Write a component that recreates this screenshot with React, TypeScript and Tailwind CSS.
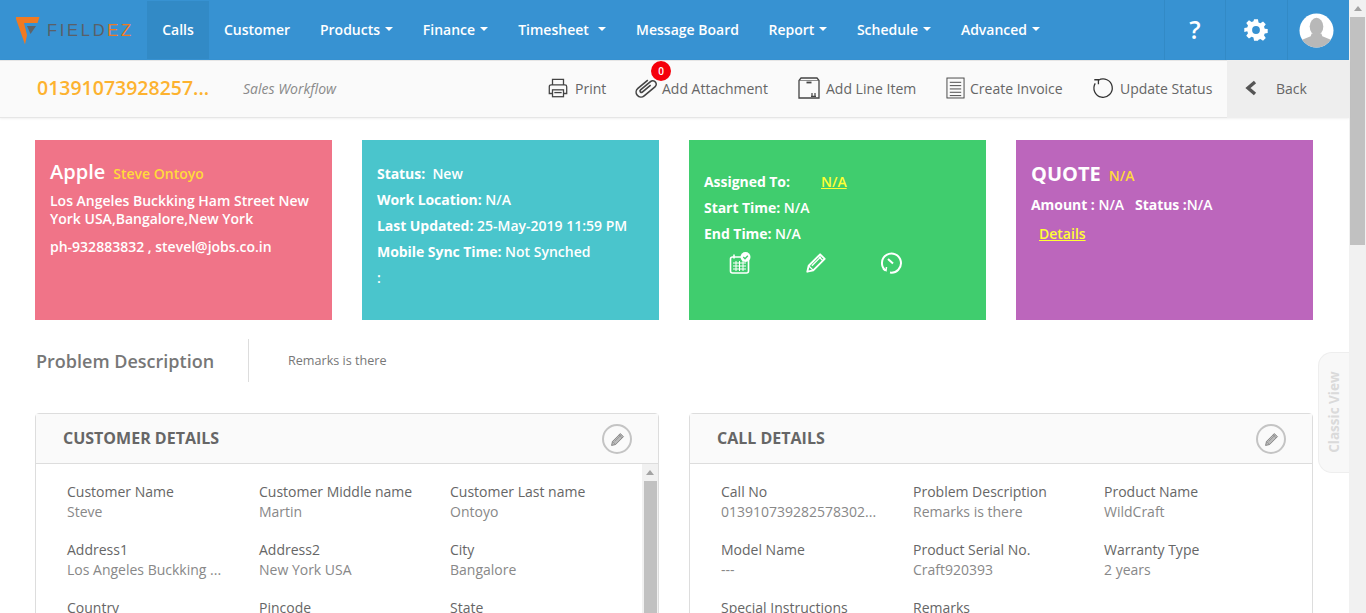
import React from "react";

const NAV = [
  { label: "Calls", w: "w-[62px]", active: true },
  { label: "Customer", w: "w-[96px]" },
  { label: "Products", w: "w-[103px]", caret: true },
  { label: "Finance", w: "w-[95px]", caret: true },
  { label: "Timesheet", w: "w-[118px]", caret: true, wide: true },
  { label: "Message Board", w: "w-[133px]" },
  { label: "Report", w: "w-[88px]", caret: true },
  { label: "Schedule", w: "w-[104px]", caret: true },
  { label: "Advanced", w: "w-[109px]", caret: true },
];

const CUSTOMER = [
  ["Customer Name", "Steve"],
  ["Customer Middle name", "Martin"],
  ["Customer Last name", "Ontoyo"],
  ["Address1", "Los Angeles Buckking ..."],
  ["Address2", "New York USA"],
  ["City", "Bangalore"],
  ["Country", "USA"],
  ["Pincode", "560001"],
  ["State", "New York"],
];

const CALL = [
  ["Call No", "013910739282578302..."],
  ["Problem Description", "Remarks is there"],
  ["Product Name", "WildCraft"],
  ["Model Name", "---"],
  ["Product Serial No.", "Craft920393"],
  ["Warranty Type", "2 years"],
  ["Special Instructions", "---"],
  ["Remarks", "---"],
  ["", ""],
];

const Caret = ({ wide }: { wide?: boolean }) => (
  <span className={`inline-block border-x-[4px] border-t-[4px] border-x-transparent border-t-white align-middle ${wide ? "ml-[9px]" : "ml-[5px]"}`} />
);

const PencilIcon = ({ className, sw = 1.6, fill = "none" }: { className: string; sw?: number; fill?: string }) => (
  <svg viewBox="0 0 24 24" className={className} fill={fill} stroke="currentColor" strokeWidth={sw} strokeLinejoin="round">
    <path d="M2.500 21.500l1.500-6.500L16.500 2.500l5 5L9 20z" />
    <path d="M4 15l5 5M14.500 4.500l5 5M7.500 15L17.500 5" strokeWidth={sw * 0.7} />
  </svg>
);

const Logo = () => (
  <div className="flex w-[147px] items-center pl-[16px]">
    <svg viewBox="0 0 24 29" className="h-[29px] w-[24px] shrink-0">
      <path d="M0 1h23.500l-2 6H8l3 12-2 9.500L0 3z" fill="#f07a22" />
      <path d="M11 10h9l-5.500 8z" fill="#5f6368" />
    </svg>
    <span className="ml-[7px] whitespace-nowrap text-[16.5px] tracking-[2.7px] text-[#5a6068] [font-family:'Liberation_Sans',sans-serif]">
      FIELD<span className="text-[#f07a22]">EZ</span>
    </span>
  </div>
);

const ToolItem = ({ icon, label, w, gap = "gap-[5px]" }: { icon: React.ReactNode; label: string; w: string; gap?: string }) => (
  <div className={`mb-[2px] flex items-center ${gap} ${w}`}>
    {icon}
    <span className="text-[14px] text-[#666]">{label}</span>
  </div>
);

const Label = ({ children, className = "" }: { children: React.ReactNode; className?: string }) => (
  <b className={`font-bold tracking-[-0.05px] ${className}`}>{children}</b>
);

const Field = ({ label, value }: { label: string; value: string }) => (
  <div className="h-[58px] text-[14px] leading-[20px]">
    <div className="text-[#666]">{label}</div>
    <div className="text-[#888]">{value}</div>
  </div>
);

const Panel = ({ title, rows, scroll }: { title: string; rows: string[][]; scroll?: boolean }) => (
  <div className="h-[300px] w-[624px] rounded-t-[4px] border border-[#ddd]">
    <div className="flex h-[50px] items-center justify-between border-b border-[#ddd] bg-[#fafafa] pl-[27px] pr-[26px]">
      <span className="mb-[2px] text-[16px] font-bold text-[#666]">{title}</span>
      <div className="mt-[1px] flex h-[30px] w-[30px] items-center justify-center rounded-full border-2 border-[#c4c4c4] text-[#888]">
        <PencilIcon className="h-[15px] w-[15px]" sw={1.6} fill="#bbb" />
      </div>
    </div>
    <div className="flex">
      <div className="grid flex-1 grid-cols-[192px_191px_192px] pl-[31px] pt-[18px]">
        {rows.map((r, i) => (
          <Field key={i} label={r[0]} value={r[1]} />
        ))}
      </div>
      {scroll && (
        <div className="flex w-[16px] flex-col items-center bg-[#f1f1f1]">
          <div className="mt-[6px] h-0 w-0 border-x-[4px] border-b-[5px] border-x-transparent border-b-[#a3a3a3]" />
          <div className="mt-[6px] h-[140px] w-[13px] bg-[#c1c1c1]" />
        </div>
      )}
    </div>
  </div>
);

export default function App() {
  return (
    <div className="flex h-[613px] w-[1366px] overflow-hidden bg-white [font-family:'Open_Sans',sans-serif]">
      <div className="relative w-[1349px] shrink-0">
        {/* top nav */}
        <div className="flex h-[60px] bg-[#3792d2]">
          <Logo />
          {NAV.map((n) => (
            <div
              key={n.label}
              className={`mt-px flex h-[58px] items-center justify-center pb-[2px] text-[14px] font-semibold text-white ${n.w} ${n.active ? "bg-[#328ac6]" : ""}`}
            >
              {n.label}
              {n.caret && <Caret wide={n.wide} />}
            </div>
          ))}
          <div className="ml-auto flex">
            <div className="flex w-[61px] items-center justify-center border-l border-[#328ac6] text-[25px] font-semibold text-white">?</div>
            <div className="flex w-[62px] items-center justify-center border-l border-[#328ac6] pr-[2px] text-white">
              <svg viewBox="0 0 24 24" className="h-[26px] w-[26px]" fill="currentColor">
                <path
                  fillRule="evenodd"
                  d="M10 1h4l.6 3.2 1.900.8 2.700-1.800 2.800 2.800-1.800 2.700.8 1.900 3 .4v4l-3 .6-.8 1.900 1.800 2.700-2.800 2.800-2.700-1.800-1.900.8L14 23h-4l-.6-3.200-1.900-.8-2.700 1.800L2 18l1.800-2.700-.8-1.900L0 14v-4l3-.6.8-1.900L2 4.800 4.800 2l2.700 1.800 1.900-.8zM12 8a4 4 0 100 8 4 4 0 000-8z"
                  transform="translate(1.200 1.200) scale(.9)"
                />
              </svg>
            </div>
            <div className="flex w-[62px] items-center justify-center border-l border-[#328ac6] pr-[4px]">
              <svg viewBox="0 0 36 36" className="h-[35px] w-[35px]">
                <clipPath id="avatarClip">
                  <circle cx="18" cy="18" r="17.500" />
                </clipPath>
                <circle cx="18" cy="18" r="17.500" fill="#fff" />
                <g clipPath="url(#avatarClip)" fill="#b8b8b8">
                  <ellipse cx="18" cy="14" rx="7" ry="9" />
                  <path d="M13 21h10l1 3 10 4v8H2v-8l10-4z" />
                </g>
              </svg>
            </div>
          </div>
        </div>

        {/* sub header */}
        <div className="flex h-[58px] items-center border-y border-[#e6e6e6] bg-[#fafafa] pl-[36px] shadow-[0_1px_2px_rgba(0,0,0,0.06)]">
          <span className="mb-[2px] ml-px w-[206px] text-[19.5px] font-semibold text-[#fdb22f]">01391073928257...</span>
          <span className="mb-[2px] w-[304px] text-[14px] italic text-[#8a8a8a]">Sales Workflow</span>
          <ToolItem
            w="w-[88px]"
            gap="gap-[6px]"
            label="Print"
            icon={
              <svg viewBox="0 0 24 24" className="h-[22px] w-[22px] text-[#444]" fill="none" stroke="currentColor" strokeWidth="1.400">
                <path d="M6 8V2.500h12V8M6 18H2.500V10.500a2 2 0 012-2h15a2 2 0 012 2V18H18" />
                <rect x="6" y="14" width="12" height="7.500" />
                <path d="M8 17h8" />
              </svg>
            }
          />
          <div className="relative mb-[2px] w-[162px]">
            <div className="flex items-center">
              <svg viewBox="0 0 24 24" className="-my-px -ml-[2px] h-[26px] w-[26px] text-[#444]" fill="none" stroke="currentColor" strokeWidth="1.500">
                <path d="M7.500 6v12a4.500 4.500 0 009 0V5a3.200 3.200 0 00-6.400 0v12a1.300 1.300 0 002.600 0V7" transform="rotate(50 12 12)" />
              </svg>
              <span className="ml-[3px] text-[14px] text-[#666]">Add Attachment</span>
            </div>
            <div className="absolute left-[16px] top-[-15px] flex h-[20px] w-[20px] items-center justify-center rounded-full bg-[#f5000b] text-[10px] font-semibold text-white">0</div>
          </div>
          <ToolItem
            w="w-[149px]"
            label="Add Line Item"
            icon={
              <svg viewBox="0 0 24 24" className="h-[24px] w-[24px] text-[#444]" fill="none" stroke="currentColor" strokeWidth="1.300">
                <path d="M4 2h16l2 2.500V22H2V4.500z" />
                <path d="M3 4.500h18" strokeWidth=".6" />
                <path d="M9.500 6.500h5" strokeWidth="1.800" />
                <path d="M15 20v-3M18 20v-3M14 20.300h5" strokeWidth="1.200" />
              </svg>
            }
          />
          <ToolItem
            w="w-[146px]"
            label="Create Invoice"
            icon={
              <svg viewBox="0 0 20 24" className="h-[24px] w-[19px] text-[#444]" fill="none" stroke="currentColor" strokeWidth="1">
                <rect x="1" y="1.500" width="18" height="21" />
                <path d="M4 6h12M4 9.500h12M4 13h12M4 16.500h12M4 20h12" />
              </svg>
            }
          />
          <ToolItem
            w="w-[135px]"
            gap="gap-[6px]"
            label="Update Status"
            icon={
              <svg viewBox="0 0 24 24" className="h-[22px] w-[22px] text-[#333]" fill="none" stroke="currentColor" strokeWidth="1.400">
                <path d="M7 3.500A10 10 0 1 1 3.500 7" />
                <path d="M7 8V3H2.500" />
              </svg>
            }
          />
          <div className="flex h-[58px] w-[122px] items-center bg-[#eee] pb-[2px] pl-[18px] text-[14px] text-[#666]">
            <svg viewBox="0 0 12 16" className="h-[16px] w-[12px] text-[#555]" fill="none" stroke="currentColor" strokeWidth="3.400">
              <path d="M10 2L3 8l7 6" />
            </svg>
            <span className="ml-[19px]">Back</span>
          </div>
        </div>

        {/* cards */}
        <div className="flex gap-[30px] pl-[35px] pt-[22px]">
          <div className="h-[180px] w-[297px] bg-[#f07488] pl-[15px] pt-[17px] text-[14px] font-semibold text-white">
            <div className="flex items-baseline leading-[30px]">
              <span className="text-[20px]">Apple</span>
              <span className="ml-[8px] text-[#ffdb3b]">Steve Ontoyo</span>
            </div>
            <div className="mt-[3px] leading-[18px]">
              Los Angeles Buckking Ham Street New
              <br />
              York USA,Bangalore,New York
            </div>
            <div className="mt-[10px] leading-[18px]">ph-932883832 , stevel@jobs.co.in</div>
          </div>
          <div className="h-[180px] w-[297px] bg-[#4ac5cc] pl-[15px] pt-[21px] text-[14px] font-semibold leading-[26px] text-white">
            <div>
              <Label>Status:</Label> &nbsp;New
            </div>
            <div>
              <Label>Work Location:</Label> N/A
            </div>
            <div>
              <Label>Last Updated:</Label> 25-May-2019 11:59 PM
            </div>
            <div>
              <Label>Mobile Sync Time:</Label> Not Synched
            </div>
            <div>:</div>
          </div>
          <div className="h-[180px] w-[297px] bg-[#40cd6e] pl-[15px] pt-[29px] text-[14px] font-semibold leading-[26px] text-white">
            <div className="flex">
              <Label className="w-[117px]">Assigned To:</Label>
              <span className="text-[#ffff33] underline">N/A</span>
            </div>
            <div>
              <Label>Start Time:</Label> N/A
            </div>
            <div>
              <Label>End Time:</Label> N/A
            </div>
            <div className="ml-[25px] mt-[5px] flex gap-[54px]">
              <svg viewBox="0 0 22 22" className="h-[22px] w-[22px]" fill="none" stroke="currentColor" strokeWidth="1.600">
                <rect x="1.500" y="5" width="18" height="16" rx="2" />
                <path d="M5 2.500v4" />
                <path d="M4 11h13M4 14h13M4 17h13M7 9v10M10.500 9v10M14 9v10" strokeWidth="1" />
                <circle cx="16.500" cy="5" r="5" fill="#fff" stroke="none" />
                <path d="M14.300 5l1.700 1.700 2.800-3" stroke="#40cd6e" strokeWidth="1.300" />
              </svg>
              <PencilIcon className="h-[22px] w-[22px]" sw={2} />
              <svg viewBox="0 0 22 22" className="h-[22px] w-[22px]" fill="none" stroke="currentColor" strokeWidth="2">
                <path d="M4.500 18.500A9.500 9.500 0 1 1 9 20.500" />
                <path d="M7 7l5 4.500" />
                <path d="M2 17l3 1.500 .5-3.500" strokeWidth="1.500" />
              </svg>
            </div>
          </div>
          <div className="h-[180px] w-[297px] bg-[#bc66bc] pl-[15px] pt-[19px] text-[14px] font-semibold text-white">
            <div className="flex items-baseline">
              <span className="text-[20px] font-bold">QUOTE</span>
              <span className="ml-[8px] text-[#ffdb3b]">N/A</span>
            </div>
            <div className="mt-[5px]">
              <Label>Amount :</Label> N/A &nbsp;&nbsp;<Label>Status :</Label>N/A
            </div>
            <div className="ml-[8px] mt-[8px] text-[#ffff33] underline">Details</div>
          </div>
        </div>

        {/* problem description */}
        <div className="ml-[36px] mt-[19px] flex h-[43px] items-center">
          <span className="mt-[2px] w-[212px] text-[18px] font-semibold text-[#777]">Problem Description</span>
          <div className="h-[43px] border-l border-[#ddd] pl-[39px] text-[12.6px] leading-[43px] text-[#777]">Remarks is there</div>
        </div>

        {/* detail panels */}
        <div className="ml-[35px] mt-[31px] flex gap-[30px]">
          <Panel title="CUSTOMER DETAILS" rows={CUSTOMER} scroll />
          <Panel title="CALL DETAILS" rows={CALL} />
        </div>

        {/* sticks out of the page edge, over the content */}
        <div className="absolute right-0 top-[352px] flex h-[121px] w-[31px] items-center justify-center rounded-l-[14px] border border-r-0 border-[#eee] bg-[#f8f8f8]">
          <span className="-rotate-90 whitespace-nowrap text-[13.5px] font-bold text-[#dadada]">Classic View</span>
        </div>
      </div>

      {/* page scrollbar */}
      <div className="flex w-[17px] flex-col items-center bg-[#f1f1f1]">
        <div className="mt-[6px] h-0 w-0 border-x-[4px] border-b-[5px] border-x-transparent border-b-[#a3a3a3]" />
        <div className="mt-[6px] h-[228px] w-[15px] bg-[#c1c1c1]" />
      </div>
    </div>
  );
}
